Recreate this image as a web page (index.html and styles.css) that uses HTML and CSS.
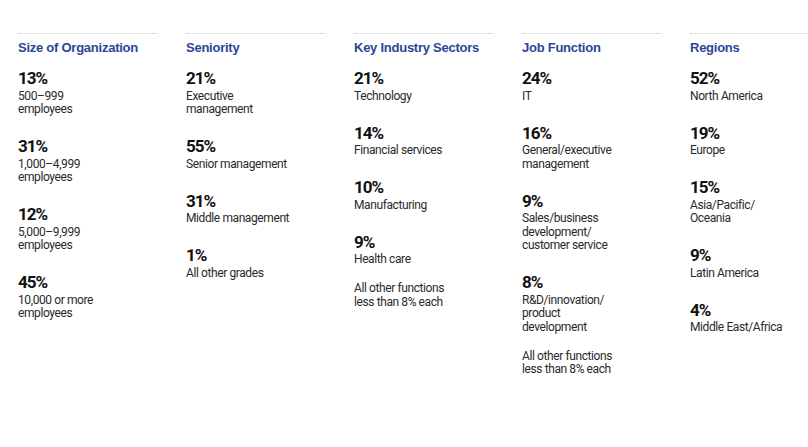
FILE: index.html
```html
<!DOCTYPE html>
<html lang="en">
<head>
<meta charset="utf-8">
<title>Survey demographics</title>
<link rel="stylesheet" href="styles.css">
</head>
<body>
<div class="grid">
  <section class="col">
    <h2 class="head">Size of Organization</h2>
    <div class="stat"><div class="num">13%</div><div class="lbl">500–999<br>employees</div></div>
    <div class="stat"><div class="num">31%</div><div class="lbl">1,000–4,999<br>employees</div></div>
    <div class="stat"><div class="num">12%</div><div class="lbl">5,000–9,999<br>employees</div></div>
    <div class="stat"><div class="num">45%</div><div class="lbl">10,000 or more<br>employees</div></div>
  </section>
  <section class="col">
    <h2 class="head">Seniority</h2>
    <div class="stat"><div class="num">21%</div><div class="lbl">Executive<br>management</div></div>
    <div class="stat"><div class="num">55%</div><div class="lbl">Senior management</div></div>
    <div class="stat"><div class="num">31%</div><div class="lbl">Middle management</div></div>
    <div class="stat"><div class="num">1%</div><div class="lbl">All other grades</div></div>
  </section>
  <section class="col">
    <h2 class="head">Key Industry Sectors</h2>
    <div class="stat"><div class="num">21%</div><div class="lbl">Technology</div></div>
    <div class="stat"><div class="num">14%</div><div class="lbl">Financial services</div></div>
    <div class="stat"><div class="num">10%</div><div class="lbl">Manufacturing</div></div>
    <div class="stat"><div class="num">9%</div><div class="lbl">Health care</div></div>
    <div class="note">All other functions<br>less than 8% each</div>
  </section>
  <section class="col">
    <h2 class="head">Job Function</h2>
    <div class="stat"><div class="num">24%</div><div class="lbl">IT</div></div>
    <div class="stat"><div class="num">16%</div><div class="lbl">General/executive<br>management</div></div>
    <div class="stat"><div class="num">9%</div><div class="lbl">Sales/business<br>development/<br>customer service</div></div>
    <div class="stat"><div class="num">8%</div><div class="lbl">R&amp;D/innovation/<br>product<br>development</div></div>
    <div class="note">All other functions<br>less than 8% each</div>
  </section>
  <section class="col">
    <h2 class="head">Regions</h2>
    <div class="stat"><div class="num">52%</div><div class="lbl">North America</div></div>
    <div class="stat"><div class="num">19%</div><div class="lbl">Europe</div></div>
    <div class="stat"><div class="num">15%</div><div class="lbl">Asia/Pacific/<br>Oceania</div></div>
    <div class="stat"><div class="num">9%</div><div class="lbl">Latin America</div></div>
    <div class="stat"><div class="num">4%</div><div class="lbl">Middle East/Africa</div></div>
  </section>
</div>
</body>
</html>
```
FILE: styles.css
```css
html, body {
  margin: 0;
  padding: 0;
  background: #fff;
}
body {
  font-family: Roboto, "Liberation Sans", Arial, sans-serif;
  color: #1a1a1a;
}
.grid {
  display: grid;
  grid-template-columns: repeat(4, 139px) 1fr;
  column-gap: 29px;
  padding: 33px 0 0 18px;
}
.col {
  border-top: 1px dotted #c4c4c4;
  display: flex;
  flex-direction: column;
  min-width: 0;
}
.head {
  margin: 6px 0 12px;
  font-family: "Liberation Sans", Arial, sans-serif;
  font-size: 13px;
  line-height: 16px;
  font-weight: bold;
  color: #2b4599;
  letter-spacing: -0.25px;
  white-space: nowrap;
}
.stat {
  margin-bottom: 19.5px;
}
.num {
  font-size: 17px;
  line-height: 21px;
  font-weight: bold;
  color: #111;
  letter-spacing: -1px;
}
.lbl, .note {
  font-size: 12px;
  line-height: 13.5px;
  color: #2a2a2a;
  letter-spacing: -0.4px;
  margin-top: 0.5px;
  white-space: nowrap;
}
.note {
  margin-top: -4px;
}
```
